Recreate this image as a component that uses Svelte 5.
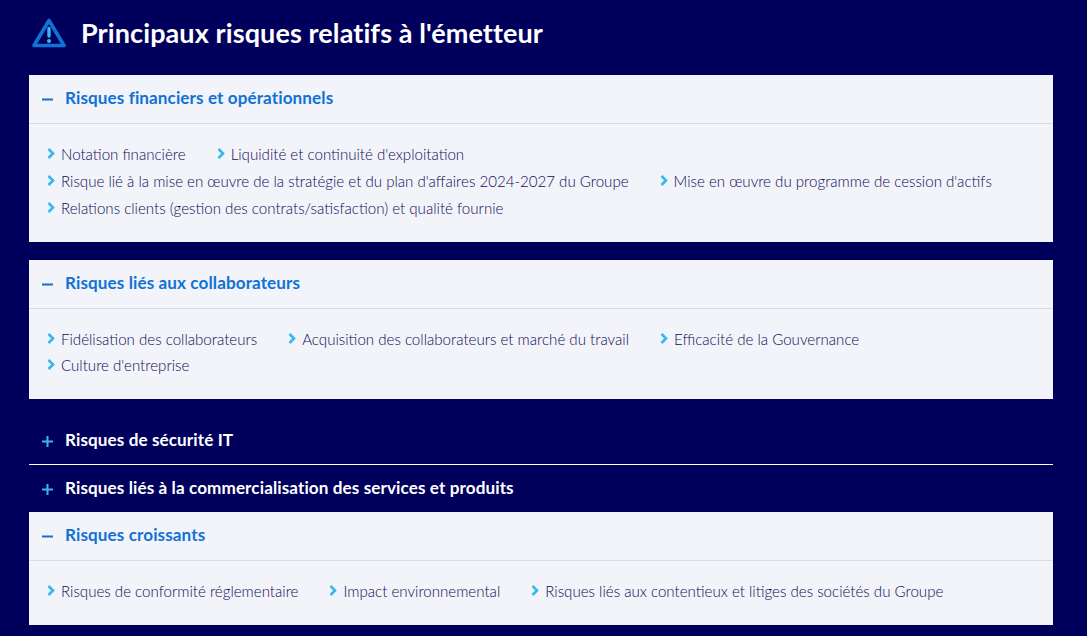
<script>
  const sections = [
    {
      title: 'Risques financiers et opérationnels',
      open: true,
      items: [
        'Notation financière',
        "Liquidité et continuité d'exploitation",
        "Risque lié à la mise en œuvre de la stratégie et du plan d'affaires 2024-2027 du Groupe",
        "Mise en œuvre du programme de cession d'actifs",
        'Relations clients (gestion des contrats/satisfaction) et qualité fournie'
      ]
    },
    {
      title: 'Risques liés aux collaborateurs',
      open: true,
      items: [
        'Fidélisation des collaborateurs',
        'Acquisition des collaborateurs et marché du travail',
        'Efficacité de la Gouvernance',
        "Culture d'entreprise"
      ]
    },
    { title: 'Risques de sécurité IT', open: false, items: [] },
    { title: 'Risques liés à la commercialisation des services et produits', open: false, items: [] },
    {
      title: 'Risques croissants',
      open: true,
      items: [
        'Risques de conformité réglementaire',
        'Impact environnemental',
        'Risques liés aux contentieux et litiges des sociétés du Groupe'
      ]
    }
  ]
</script>

<style>
  :global(body) {
    background: #00005c;
    font-family: Lato, "Open Sans", sans-serif;
  }

  .page {
    height: 636px;
    padding: 0 34px 0 29px;
    box-sizing: border-box;
    overflow: hidden;
  }

  .heading {
    display: flex;
    align-items: center;
    gap: 15px;
    height: 75.3px;
    padding-left: 3px;
    padding-bottom: 10px;
    box-sizing: border-box;
  }

  .heading h1 {
    margin: 0;
    color: #fff;
    font-size: 27px;
    font-weight: 700;
    letter-spacing: 0.1px;
  }

  .card {
    background: #f3f3fa;
    margin-bottom: 18px;
  }

  .card:last-child {
    margin-bottom: 0;
  }

  .head {
    display: flex;
    align-items: center;
    height: 49px;
    padding-left: 13px;
    gap: 12px;
    box-sizing: border-box;
    border-bottom: 1px solid #dcdce8;
    color: #0f72d6;
    font-size: 17.1px;
    font-weight: 700;
    letter-spacing: 0.1px;
  }

  .head span {
    margin-bottom: 3px;
  }

  .closed {
    margin: 0;
    background: none;
  }

  .closed .head {
    height: 48px;
    color: #fff;
    border-bottom: 1px solid #fff;
  }

  .closed.last .head {
    height: 47px;
    border-bottom: none;
  }

  .mark {
    width: 11px;
    height: 12px;
    flex: none;
  }

  .list {
    display: flex;
    flex-wrap: wrap;
    list-style: none;
    margin: 0;
    padding: 19px 30px 23px 18px;
    column-gap: 31px;
    row-gap: 4.7px;
    color: #0c0c58;
    font-size: 15.1px;
    font-weight: 300;
    line-height: 22px;
  }

  .list li {
    display: flex;
    align-items: flex-start;
    gap: 6px;
  }

  .chev {
    width: 8px;
    height: 11px;
    margin-top: 5px;
    flex: none;
  }
</style>

<div class="page">
  <div class="heading">
    <svg width="34" height="30" viewBox="0 0 34 30" fill="none">
      <path d="M17 2.5 L32 27.5 H2 Z" stroke="#0f72d6" stroke-width="3.6" stroke-linejoin="round" />
      <path d="M17 10.5 V18" stroke="#35b8f0" stroke-width="3.4" stroke-linecap="round" />
      <circle cx="17" cy="23" r="2" fill="#35b8f0" />
    </svg>
    <h1>Principaux risques relatifs à l'émetteur</h1>
  </div>

  {#each sections as s, i}
    <div class="card" class:closed={!s.open} class:last={i === 3}>
      <div class="head">
        <svg class="mark" viewBox="0 0 11 12">
          {#if s.open}
            <path d="M0 6.5 H11" stroke="#0f72d6" stroke-width="2" />
          {:else}
            <path d="M0 6.5 H11 M5.5 1 V12" stroke="#35b8f0" stroke-width="2" />
          {/if}
        </svg>
        <span>{s.title}</span>
      </div>
      {#if s.open}
        <ul class="list">
          {#each s.items as item}
            <li>
              <svg class="chev" viewBox="0 0 8 11" fill="none">
                <path d="M1.5 1 L6 5.5 L1.5 10" stroke="#35b8f0" stroke-width="2.6" />
              </svg>
              <span>{item}</span>
            </li>
          {/each}
        </ul>
      {/if}
    </div>
  {/each}
</div>
